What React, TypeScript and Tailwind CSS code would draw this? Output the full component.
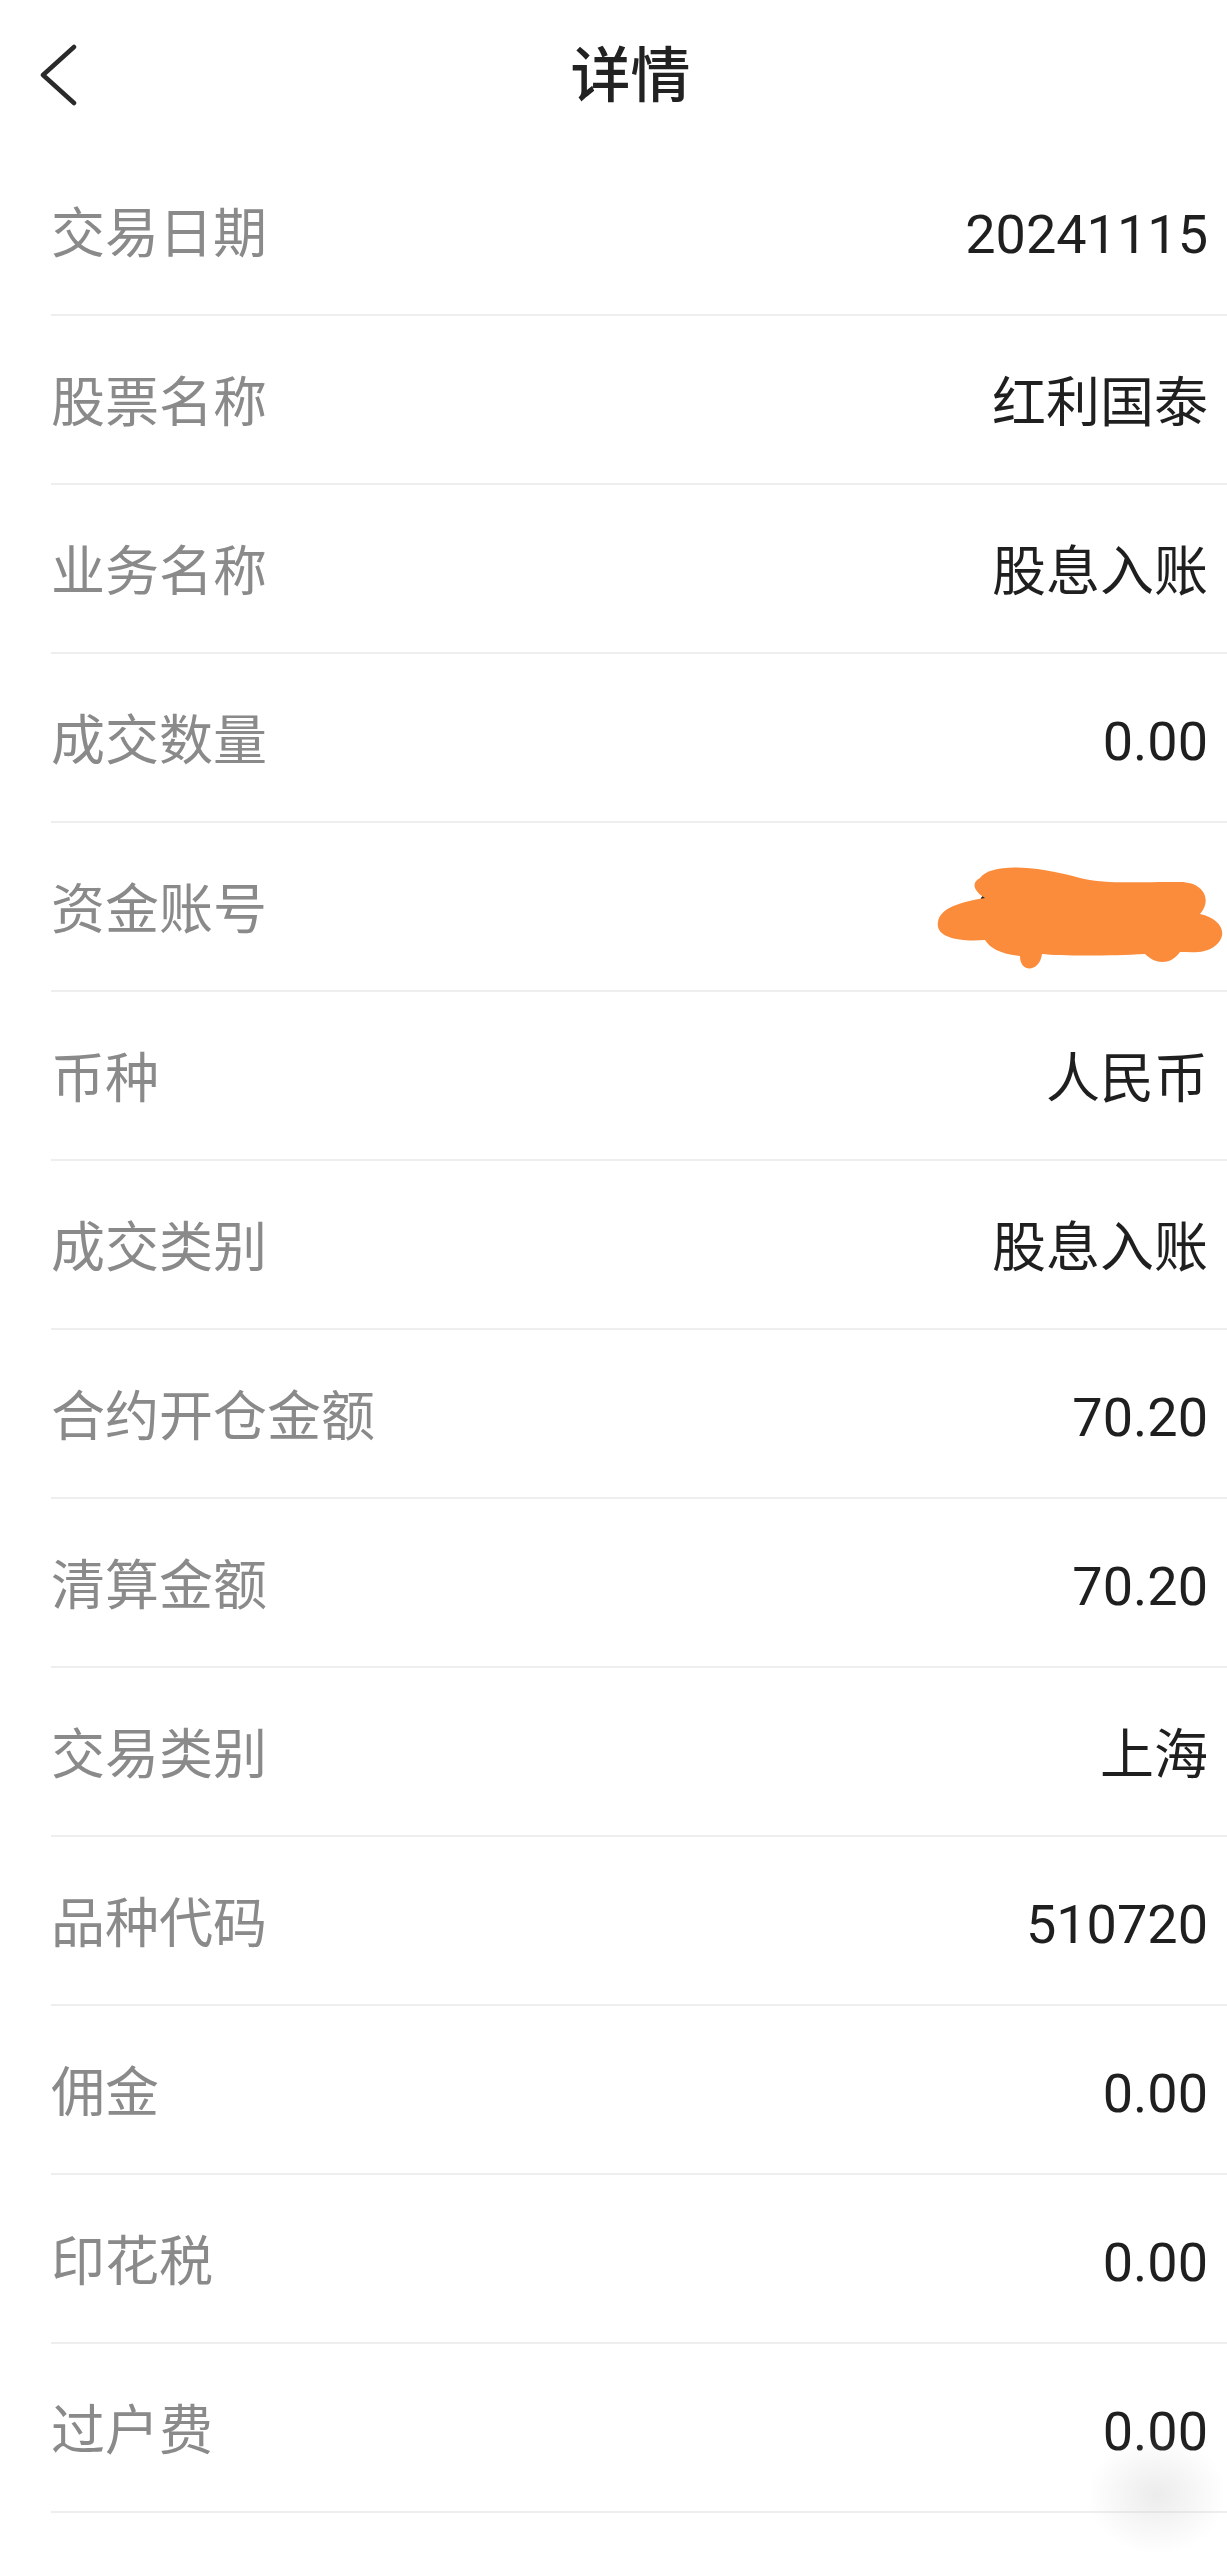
import React from "react";

const rows: [string, string][] = [
  ["交易日期", "20241115"],
  ["股票名称", "红利国泰"],
  ["业务名称", "股息入账"],
  ["成交数量", "0.00"],
  ["资金账号", "__MASK__"],
  ["币种", "人民币"],
  ["成交类别", "股息入账"],
  ["合约开仓金额", "70.20"],
  ["清算金额", "70.20"],
  ["交易类别", "上海"],
  ["品种代码", "510720"],
  ["佣金", "0.00"],
  ["印花税", "0.00"],
  ["过户费", "0.00"],
];

function Mask() {
  return (
    <div className="relative w-[290px] h-[80px] mr-[-16px] mt-[14px]">
      <span className="absolute left-[40px] top-[6px] text-[54px] leading-none text-[#222]">6</span>
      <svg
        className="absolute -left-[4px] -top-[24px]"
        width="300"
        height="124"
        viewBox="0 0 300 120"
      >
        <path
          d="M50 22 C 60 8, 100 8, 150 22 C 175 28, 200 26, 250 26 C 275 26, 282 45, 270 58 C 290 62, 300 78, 285 90 C 275 98, 262 96, 250 96 C 240 110, 225 108, 215 98 C 180 100, 130 100, 112 98 C 110 116, 90 118, 90 100 C 70 98, 60 92, 55 84 C 30 86, 5 82, 8 66 C 10 52, 30 46, 55 42 C 42 34, 42 26, 50 22 Z"
          fill="#FB8C3B"
        />
      </svg>
    </div>
  );
}

export default function App() {
  return (
    <div
      className="relative w-[1227px] min-h-[2555px] bg-white overflow-hidden"
      style={{ fontFamily: '"Roboto", "Noto Sans CJK SC", sans-serif' }}
    >
      <header className="relative h-[147px] flex items-center justify-center">
        <button className="absolute left-[36px] top-[44px] w-[44px] h-[62px] flex items-center justify-center">
          <svg width="40" height="62" viewBox="0 0 40 62" fill="none">
            <path
              d="M36 3 L5 31 L36 59"
              stroke="#2a2a2a"
              strokeWidth="4.5"
              strokeLinecap="round"
              strokeLinejoin="round"
            />
          </svg>
        </button>
        <h1 className="text-[60px] leading-none text-[#222] font-medium ml-[34px] mt-[6px]">
          详情
        </h1>
      </header>
      <main>
        {rows.map(([label, value]) => (
          <div
            key={label}
            className="ml-[51px] pr-[19px] h-[169px] border-b-2 border-[#eeeeee] flex items-center justify-between pt-[8px]"
          >
            <span className="text-[54px] leading-none text-[#8a8a8a]">
              {label}
            </span>
            {value === "__MASK__" ? (
              <Mask />
            ) : (
              <span className="text-[54px] leading-none text-[#1f1f1f]">
                {value}
              </span>
            )}
          </div>
        ))}
      </main>
      <div className="absolute right-0 bottom-0 w-[140px] h-[120px] bg-[radial-gradient(ellipse_at_center,rgba(200,200,200,0.35),rgba(255,255,255,0)_70%)]" />
    </div>
  );
}
